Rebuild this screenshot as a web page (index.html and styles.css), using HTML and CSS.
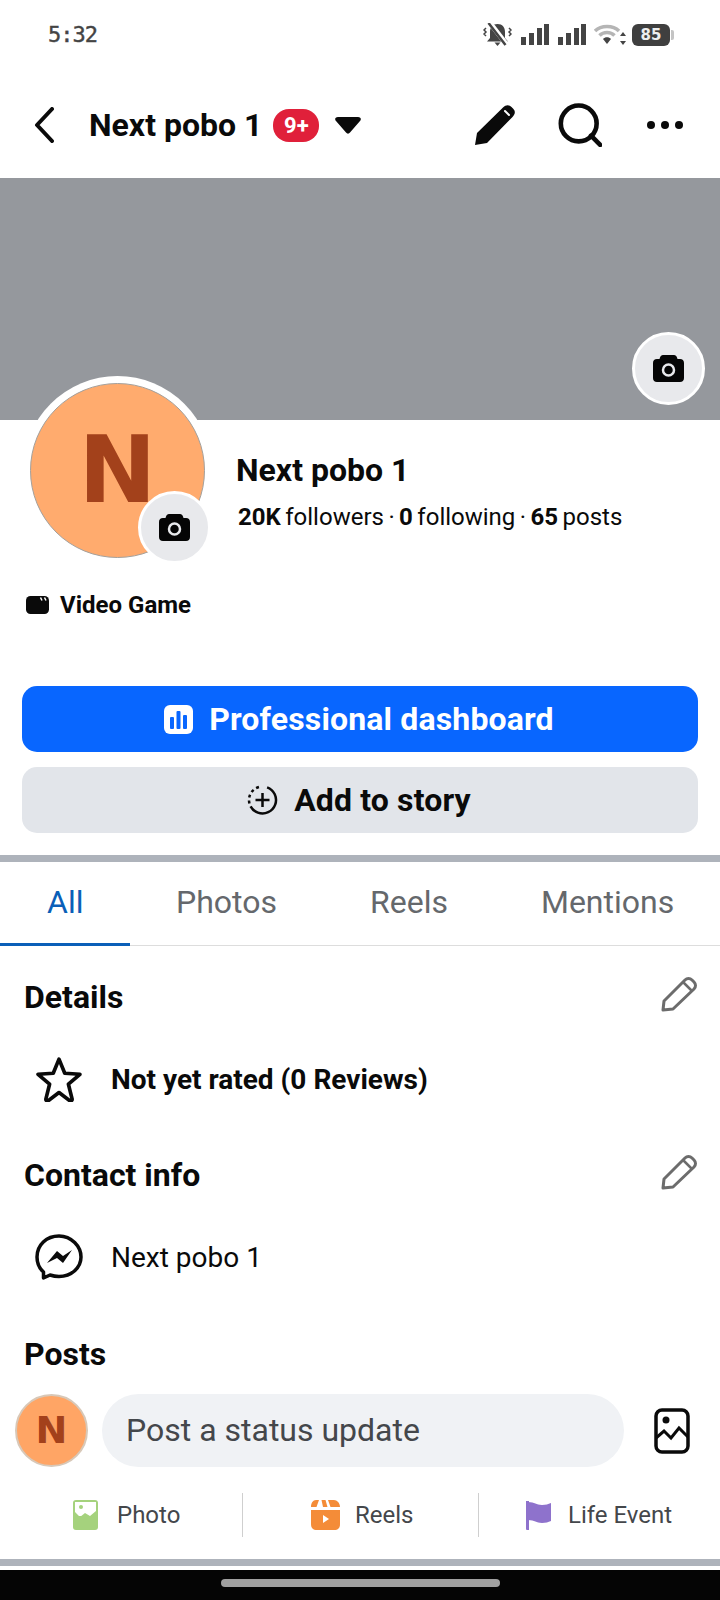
FILE: index.html
```html
<!DOCTYPE html>
<html lang="en">
<head>
    <meta charset="UTF-8">
    <meta name="viewport" content="width=device-width, initial-scale=1.0">
    <title>Next pobo 1</title>
    <link rel="stylesheet" href="styles.css">
</head>
<body>
    <div class="phone">
        <!-- status bar -->
        <div class="status-bar">
            <span class="clock">5:32</span>
            <div class="status-icons">
                <svg width="29" height="23" viewBox="0 0 29 23"><path d="M14.500 1c-5 0-7.500 3.500-7.500 8v6l-3 3.500h21l-3-3.500V9c0-4.500-2.500-8-7.500-8z" fill="#444"/><path d="M11.500 19.500h6l-3 3.500z" fill="#444"/><path d="M7 0l17 22" stroke="#fff" stroke-width="5"/><path d="M5.500 0l17 22" stroke="#444" stroke-width="2.500"/><path d="M3 5L1 7l2 2-2 2 2 2M26 5l2 2-2 2 2 2-2 2" stroke="#444" stroke-width="1.500" fill="none"/></svg>
                <svg width="28" height="21" viewBox="0 0 28 21" fill="#444"><rect x="0" y="13" width="5" height="8"/><rect x="8" y="9" width="5" height="12"/><rect x="16" y="4" width="5" height="17"/><rect x="23" y="0" width="5" height="21"/></svg>
                <svg width="28" height="21" viewBox="0 0 28 21" fill="#444"><rect x="0" y="13" width="5" height="8"/><rect x="8" y="9" width="5" height="12"/><rect x="16" y="4" width="5" height="17"/><rect x="23" y="0" width="5" height="21"/></svg>
                <svg width="32" height="21" viewBox="0 0 32 21"><path d="M1 7c6-6 18-6 24 0M5.500 11.500c4-4 11-4 15 0" fill="none" stroke="#b5b5b5" stroke-width="3.500"/><path d="M9 15c2-2.500 6-2.500 8 0l-4 5z" fill="#444"/><path d="M29 8l3 4h-6zM29 21l3-4h-6z" fill="#444"/></svg>
                <div class="battery"><span class="battery-level">85</span><span class="battery-tip"></span></div>
            </div>
        </div>

        <!-- top navigation -->
        <div class="nav">
            <svg class="nav-back" width="20" height="36" viewBox="0 0 20 36"><path d="M18 2L3 18l15 16" fill="none" stroke="#0a0a0a" stroke-width="4" stroke-linecap="round" stroke-linejoin="round"/></svg>
            <span class="nav-title">Next pobo 1</span>
            <span class="nav-badge">9+</span>
            <svg class="nav-caret" width="26" height="17" viewBox="0 0 26 17"><path d="M3 0h20c3 0 3.500 2.500 2 4L15 15.500c-1 1.500-3 1.500-4 0L1 4C-.5 2.500 0 0 3 0z" fill="#0a0a0a"/></svg>
            <div class="nav-actions">
                <svg width="42" height="42" viewBox="0 0 42 42"><path d="M1 41l2-12L29 3.500c3-3 6-3 8.500-.5l1.500 1.500c2.500 2.500 2.500 5.500-.5 8.500L13 39z" fill="#0a0a0a"/><path d="M31 7l4 4" stroke="#fff" stroke-width="2" stroke-linecap="round"/></svg>
                <svg class="nav-search" width="44" height="44" viewBox="0 0 42.500 43"><circle cx="20" cy="20" r="17.500" fill="none" stroke="#0a0a0a" stroke-width="4.500"/><path d="M32 32l9 9" stroke="#0a0a0a" stroke-width="4.500" stroke-linecap="round"/></svg>
                <svg class="nav-more" width="38" height="10" viewBox="0 0 38 10" fill="#0a0a0a"><circle cx="5" cy="5" r="4"/><circle cx="19" cy="5" r="4"/><circle cx="33" cy="5" r="4"/></svg>
            </div>
        </div>

        <!-- cover -->
        <div class="cover">
            <div class="camera-btn cover-camera">
                <svg width="31" height="27" viewBox="0 0 31 27"><path d="M10 0h11c1.500 0 2.500 1 3 2.500l.5 1.500H27c2.500 0 4 1.500 4 4v15c0 2.500-1.500 4-4 4H4c-2.500 0-4-1.500-4-4V8c0-2.500 1.500-4 4-4h2.500L7 2.500C7.500 1 8.500 0 10 0z" fill="#050505"/><circle cx="15.500" cy="15" r="5.500" fill="none" stroke="#e8e9ec" stroke-width="2.500"/></svg>
            </div>
        </div>

        <!-- profile -->
        <div class="profile">
            <div class="avatar">
                <div class="avatar-inner">N</div>
                <div class="camera-btn avatar-camera">
                    <svg width="31" height="27" viewBox="0 0 31 27"><path d="M10 0h11c1.500 0 2.500 1 3 2.500l.5 1.500H27c2.500 0 4 1.500 4 4v15c0 2.500-1.500 4-4 4H4c-2.500 0-4-1.500-4-4V8c0-2.500 1.500-4 4-4h2.500L7 2.500C7.500 1 8.500 0 10 0z" fill="#050505"/><circle cx="15.500" cy="15" r="5.500" fill="none" stroke="#e8e9ec" stroke-width="2.500"/></svg>
                </div>
            </div>
            <div class="profile-info">
                <div class="profile-name">Next pobo 1</div>
                <div class="profile-stats"><b>20K</b> followers · <b>0</b> following · <b>65</b> posts</div>
            </div>
        </div>

        <div class="category">
            <svg width="23" height="18" viewBox="0 0 23 18"><rect width="23" height="18" rx="4.500" fill="#0a0a0a"/><path d="M14.500 1.500l1.500 3M18.500 1.500l1.500 3" stroke="#fff" stroke-width="1.500"/></svg>
            <span>Video Game</span>
        </div>

        <!-- buttons -->
        <div class="actions">
            <div class="btn btn-primary">
                <svg width="29" height="29" viewBox="0 0 29 29"><rect width="29" height="29" rx="6" fill="#fff"/><rect x="6" y="12" width="4" height="12" rx="1" fill="#0866ff"/><rect x="12.500" y="6" width="4" height="18" rx="1" fill="#0866ff"/><rect x="19" y="10" width="4" height="14" rx="1" fill="#0866ff"/></svg>
                <span>Professional dashboard</span>
            </div>
            <div class="btn btn-secondary">
                <svg width="31" height="30" viewBox="0 0 31 30"><circle cx="15.500" cy="15" r="13.500" fill="none" stroke="#0a0a0a" stroke-width="2.500" stroke-dasharray="52 3 3 3 3 3 3 3 3 10" transform="rotate(-70 15.500 15)"/><path d="M15.500 8v14M8.500 15h14" stroke="#0a0a0a" stroke-width="2.500"/></svg>
                <span>Add to story</span>
            </div>
        </div>

        <div class="divider"></div>

        <!-- tabs -->
        <div class="tabs">
            <div class="tab tab-all active">All</div>
            <div class="tab tab-photos">Photos</div>
            <div class="tab tab-reels">Reels</div>
            <div class="tab tab-mentions">Mentions</div>
        </div>

        <!-- details -->
        <div class="section-head details-head">
            <span>Details</span>
            <svg width="36" height="35" viewBox="0 0 36 35"><path d="M2 33l1-9L24 3c2-2 5-2 7 0l2 2c2 2 2 5 0 7L12 32z" fill="none" stroke="#6c6c6c" stroke-width="3" stroke-linejoin="round"/><path d="M22 5l9 9" stroke="#6c6c6c" stroke-width="2.500"/></svg>
        </div>
        <div class="info-row rating-row">
            <svg width="48" height="45" viewBox="2 1 44 43"><path d="M24 3l5.500 13.500 14.500 1-11 9.500 3.500 14c.300 1.500-1 2.500-2.500 1.500L24 35l-10 7.500c-1.500 1-2.800 0-2.500-1.500l3.500-14-11-9.500 14.500-1z" fill="none" stroke="#0a0a0a" stroke-width="3.500" stroke-linejoin="round"/></svg>
            <b>Not yet rated (0 Reviews)</b>
        </div>

        <div class="section-head contact-head">
            <span>Contact info</span>
            <svg width="36" height="35" viewBox="0 0 36 35"><path d="M2 33l1-9L24 3c2-2 5-2 7 0l2 2c2 2 2 5 0 7L12 32z" fill="none" stroke="#6c6c6c" stroke-width="3" stroke-linejoin="round"/><path d="M22 5l9 9" stroke="#6c6c6c" stroke-width="2.500"/></svg>
        </div>
        <div class="info-row contact-row">
            <svg width="48" height="46" viewBox="0 0 48 46"><path d="M24 2C11.500 2 2 11 2 23c0 6 2.500 11.500 6.500 15v6l6.500-3c3 1 6 1.500 9 1.500 12.500 0 22-9 22-19.500S36.500 2 24 2z" fill="none" stroke="#0a0a0a" stroke-width="3.500" stroke-linejoin="round"/><path d="M12 29l10-12 6 5 9-6-9 13-6-5z" fill="#0a0a0a"/></svg>
            <span>Next pobo 1</span>
        </div>

        <div class="section-head posts-head"><span>Posts</span></div>

        <!-- composer -->
        <div class="composer">
            <div class="composer-avatar">N</div>
            <div class="composer-input">Post a status update</div>
            <svg width="36" height="46" viewBox="0 0 36 46"><rect x="2" y="2" width="32" height="42" rx="6" fill="none" stroke="#0a0a0a" stroke-width="3.500"/><circle cx="12" cy="12" r="3.500" fill="#0a0a0a"/><path d="M2 30l8-7 7 7 8-10 9 9" fill="none" stroke="#0a0a0a" stroke-width="3"/></svg>
        </div>

        <div class="post-types">
            <div class="post-type type-photo">
                <svg width="25" height="30" viewBox="0 0 25 30"><rect width="25" height="30" rx="3" fill="#a5d27d"/><rect x="2" y="2" width="21" height="14" fill="#fff"/><path d="M2 12l5 5 5-4 5 3 6-5v7H2z" fill="#a5d27d"/><circle cx="8" cy="7" r="2" fill="#a5d27d"/></svg>
                <span>Photo</span>
            </div>
            <div class="post-type type-reels">
                <svg width="29" height="30" viewBox="0 0 29 30"><path d="M0 10h29v14c0 4-2 6-6 6H6c-4 0-6-2-6-6z" fill="#f48c38"/><path d="M5 0h3l-2.500 7H0c0-4 2-7 5-7zM10.500 0h4l2 7h-4.500zM17 0h6c3 0 6 3 6 7h-9.500z" fill="#f48c38"/><path d="M12 15l6 4-6 4z" fill="#fff"/></svg>
                <span>Reels</span>
            </div>
            <div class="post-type type-event">
                <svg width="25" height="29" viewBox="0 0 25 29"><path d="M0 0h3v29H1a1 1 0 0 1-1-1z" fill="#8e72cc"/><path d="M2 1c7 0 8 3 14 3 4 0 6-1 9-2v18c-3 1-5 2-9 2-6 0-7-3-14-3z" fill="#8e72cc"/></svg>
                <span>Life Event</span>
            </div>
        </div>

        <div class="divider divider-bottom"></div>

        <!-- android nav -->
        <div class="home-bar"><div class="home-handle"></div></div>
    </div>
</body>
</html>
```

FILE: styles.css
```css
body {
    margin: 0;
    background: #fff;
    font-family: Roboto, "Liberation Sans", sans-serif;
    color: #0a0a0a;
}

.phone {
    width: 720px;
    height: 1600px;
    overflow: hidden;
    display: flex;
    flex-direction: column;
}

svg {
    display: block;
    flex: none;
}

/* status bar */
.status-bar {
    height: 68px;
    flex: none;
    display: flex;
    align-items: center;
    justify-content: space-between;
    padding: 1px 46px 0 48px;
    box-sizing: border-box;
}

.clock {
    font-family: "DejaVu Sans Mono", monospace;
    font-size: 22px;
    font-weight: 500;
    letter-spacing: -1px;
    color: #444;
    -webkit-text-stroke: 0.4px #444;
}

.status-icons {
    display: flex;
    align-items: center;
    gap: 9px;
}

.status-icons svg:nth-child(3) {
    margin-right: -1px;
}

.battery {
    display: flex;
    align-items: center;
    gap: 1px;
    margin-left: -3px;
}

.battery-level {
    width: 38px;
    height: 22px;
    background: #3f3f3f;
    border-radius: 6px;
    color: #eee;
    font-family: "DejaVu Sans", sans-serif;
    font-size: 15px;
    font-weight: bold;
    line-height: 22px;
    text-align: center;
}

.battery-tip {
    width: 3px;
    height: 10px;
    background: #c4c4c4;
    border-radius: 0 2px 2px 0;
}

/* nav */
.nav {
    height: 110px;
    flex: none;
    display: flex;
    align-items: center;
    box-sizing: border-box;
    padding: 4px 36px 0 34px;
}

.nav-title {
    margin-left: 35px;
    font-size: 32px;
    font-weight: 700;
}

.nav-badge {
    margin-left: 11px;
    width: 46px;
    height: 33px;
    border-radius: 16px;
    background: #e0203a;
    color: #fff;
    font-size: 22px;
    font-weight: 700;
    line-height: 33px;
    text-align: center;
}

.nav-caret {
    margin-left: 16px;
}

.nav-actions {
    margin-left: auto;
    display: flex;
    align-items: center;
}

.nav-search {
    margin-left: 42px;
}

.nav-more {
    margin-left: 44px;
}

/* cover */
.cover {
    height: 242px;
    flex: none;
    position: relative;
    background: #95989d;
}

.camera-btn {
    position: absolute;
    width: 73px;
    height: 73px;
    box-sizing: border-box;
    border: 3px solid #fff;
    border-radius: 50%;
    background: #e8e9ec;
    display: flex;
    align-items: center;
    justify-content: center;
}

.cover-camera {
    right: 15px;
    top: 154px;
}

/* profile */
.profile {
    height: 145px;
    flex: none;
    display: flex;
}

.avatar {
    position: relative;
    width: 189px;
    height: 189px;
    margin: -44px 0 0 23px;
    flex: none;
    box-sizing: border-box;
    padding: 7px;
    background: #fff;
    border-radius: 50%;
}

.avatar-inner {
    width: 175px;
    height: 175px;
    box-sizing: border-box;
    border: 1px solid #a3a09c;
    border-radius: 50%;
    background: #ffab6e;
    color: #a3411b;
    font-family: "DejaVu Sans", sans-serif;
    font-size: 93px;
    font-weight: 700;
    line-height: 173px;
    text-align: center;
}

.avatar-camera {
    left: 115px;
    top: 115px;
}

.profile-info {
    margin-left: 24px;
    padding-top: 31px;
}

.profile-name {
    font-size: 32px;
    font-weight: 700;
    line-height: 38px;
}

.profile-stats {
    margin: 13px 0 0 2px;
    font-size: 24px;
    line-height: 30px;
    word-spacing: -1.500px;
}

.profile-stats b {
    font-weight: 700;
}

.category {
    height: 121px;
    flex: none;
    box-sizing: border-box;
    padding: 20px 0 0 26px;
    display: flex;
    align-items: flex-start;
    gap: 11px;
    font-size: 24px;
    font-weight: 700;
}

.category svg {
    margin-top: 11px;
}

.category span {
    line-height: 40px;
}

/* buttons */
.actions {
    display: flex;
    flex-direction: column;
    gap: 15px;
    padding: 0 22px;
}

.btn {
    height: 66px;
    border-radius: 15px;
    display: flex;
    align-items: center;
    justify-content: center;
    font-size: 32px;
    font-weight: 700;
    letter-spacing: 0.15px;
}

.btn-primary {
    gap: 16px;
    padding-right: 2px;
    background: #0866ff;
    color: #fff;
}

.btn-secondary {
    gap: 16px;
    padding-right: 2px;
    background: #e2e5ea;
}

.divider {
    height: 7px;
    flex: none;
    margin-top: 22px;
    background: #aeb3bb;
}

/* tabs */
.tabs {
    height: 84px;
    flex: none;
    box-sizing: border-box;
    border-bottom: 1px solid #ddd;
    display: flex;
    align-items: flex-start;
    font-size: 32px;
    line-height: 80px;
    color: #65686c;
}

.tab-all {
    width: 130px;
    height: 84px;
    box-sizing: border-box;
    padding-left: 47px;
    border-bottom: 3px solid #0a5fb8;
    color: #0a5fb8;
}

.tab-photos {
    margin-left: 46px;
}

.tab-reels {
    margin-left: 93px;
}

.tab-mentions {
    margin-left: 93px;
}

/* sections */
.section-head {
    flex: none;
    display: flex;
    align-items: flex-start;
    justify-content: space-between;
    padding: 0 23px 0 24px;
    font-size: 32px;
    font-weight: 700;
    line-height: 38px;
}

.section-head svg {
    margin-top: -1px;
}

.details-head {
    margin-top: 32px;
}

.contact-head {
    margin-top: 54px;
}

.posts-head {
    margin-top: 55px;
}

.info-row {
    flex: none;
    display: flex;
    align-items: center;
    gap: 28px;
    padding-left: 35px;
    font-size: 28px;
}

.rating-row {
    margin-top: 41px;
}

.contact-row {
    margin-top: 40px;
}

/* composer */
.composer {
    flex: none;
    margin-top: 21px;
    display: flex;
    align-items: center;
    padding-left: 15px;
}

.composer-avatar {
    width: 73px;
    height: 73px;
    flex: none;
    box-sizing: border-box;
    border: 2px solid #d8c8b8;
    border-radius: 50%;
    background: #ffa565;
    color: #a3411b;
    font-family: "DejaVu Sans", sans-serif;
    font-size: 38px;
    font-weight: 700;
    line-height: 69px;
    text-align: center;
}

.composer-input {
    width: 522px;
    height: 73px;
    flex: none;
    margin-left: 14px;
    box-sizing: border-box;
    padding-left: 24px;
    border-radius: 37px;
    background: #f0f2f5;
    color: #44474b;
    font-size: 32px;
    line-height: 73px;
}

.composer svg {
    margin-left: 30px;
}

.post-types {
    height: 92px;
    flex: none;
    box-sizing: border-box;
    padding-top: 4px;
    display: flex;
    align-items: center;
    font-size: 24px;
    color: #44474b;
}

.post-type {
    height: 44px;
    display: flex;
    align-items: center;
    box-sizing: border-box;
    gap: 19px;
}

.type-photo {
    width: 243px;
    padding-left: 73px;
    border-right: 1.500px solid #cfcfcf;
}

.type-reels {
    width: 236px;
    padding-left: 68px;
    gap: 15px;
    border-right: 1.500px solid #cfcfcf;
}

.type-event {
    padding-left: 47px;
    gap: 17px;
}

.divider-bottom {
    margin-top: 0;
}

.home-bar {
    flex: none;
    margin-top: 4px;
    height: 30px;
    background: #050505;
    display: flex;
    justify-content: center;
    padding-top: 9px;
    box-sizing: border-box;
}

.home-handle {
    width: 279px;
    height: 8px;
    border-radius: 4px;
    background: #a0a0a0;
}
```
